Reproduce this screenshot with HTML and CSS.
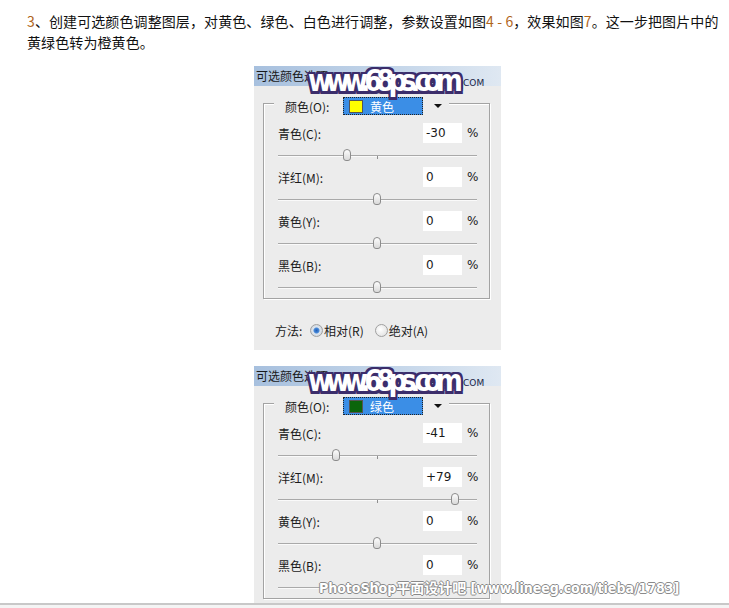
FILE: index.html
```html
<!DOCTYPE html>
<html>
<head>
    <meta charset="utf-8">
    <link rel="stylesheet" href="styles.css">
</head>
<body>
    <div class="article">
        <p class="intro"><span class="num">3</span>、创建可选颜色调整图层，对黄色、绿色、白色进行调整，参数设置如图<span class="num">4 - 6</span>，效果如图<span class="num">7</span>。这一步把图片中的黄绿色转为橙黄色。</p>

        <div class="dialog">
            <div class="titlebar">可选颜色选项</div>
            <div class="wm-small">思缘设计论坛 WWW.MISSYUAN.COM</div>
            <div class="wm68">www.68ps.com</div>
            <div class="group">
                <div class="legend">
                    <span class="legend-label">颜色(O):</span>
                    <div class="select"><i class="swatch swatch-yellow"></i>黄色</div>
                    <span class="arrow"><i></i></span>
                </div>
                <div class="rows">
                    <div class="row">
                        <div class="row-head"><span class="row-label">青色(C):</span><span class="value">-30</span><span class="pct">%</span></div>
                        <div class="slider"><div class="track"></div><div class="thumb" style="--v:-30"></div></div>
                    </div>
                    <div class="row">
                        <div class="row-head"><span class="row-label">洋红(M):</span><span class="value">0</span><span class="pct">%</span></div>
                        <div class="slider"><div class="track"></div><div class="thumb" style="--v:0"></div></div>
                    </div>
                    <div class="row">
                        <div class="row-head"><span class="row-label">黄色(Y):</span><span class="value">0</span><span class="pct">%</span></div>
                        <div class="slider"><div class="track"></div><div class="thumb" style="--v:0"></div></div>
                    </div>
                    <div class="row">
                        <div class="row-head"><span class="row-label">黑色(B):</span><span class="value">0</span><span class="pct">%</span></div>
                        <div class="slider"><div class="track"></div><div class="thumb" style="--v:0"></div></div>
                    </div>
                </div>
            </div>
            <div class="method">
                <span class="method-label">方法:</span>
                <span class="radio radio-on"></span><span class="radio-text">相对(R)</span>
                <span class="radio radio-second"></span><span class="radio-text">绝对(A)</span>
            </div>
        </div>

        <div class="clip">
            <div class="dialog dialog-flat">
                <div class="titlebar">可选颜色选项</div>
                <div class="wm-small">思缘设计论坛 WWW.MISSYUAN.COM</div>
                <div class="wm68">www.68ps.com</div>
                <div class="group">
                    <div class="legend">
                        <span class="legend-label">颜色(O):</span>
                        <div class="select"><i class="swatch swatch-green"></i>绿色</div>
                        <span class="arrow"><i></i></span>
                    </div>
                    <div class="rows">
                        <div class="row">
                            <div class="row-head"><span class="row-label">青色(C):</span><span class="value">-41</span><span class="pct">%</span></div>
                            <div class="slider"><div class="track"></div><div class="thumb" style="--v:-41"></div></div>
                        </div>
                        <div class="row">
                            <div class="row-head"><span class="row-label">洋红(M):</span><span class="value">+79</span><span class="pct">%</span></div>
                            <div class="slider"><div class="track"></div><div class="thumb" style="--v:79"></div></div>
                        </div>
                        <div class="row">
                            <div class="row-head"><span class="row-label">黄色(Y):</span><span class="value">0</span><span class="pct">%</span></div>
                            <div class="slider"><div class="track"></div><div class="thumb" style="--v:0"></div></div>
                        </div>
                        <div class="row">
                            <div class="row-head"><span class="row-label">黑色(B):</span><span class="value">0</span><span class="pct">%</span></div>
                            <div class="slider"><div class="track"></div><div class="thumb" style="--v:0"></div></div>
                        </div>
                    </div>
                </div>
            </div>
        </div>

        <div class="wm-bottom">PhotoShop平面设计吧 [www.lineeg.com/tieba/1783]</div>
    </div>
    <div class="footer"></div>
</body>
</html>
```

FILE: styles.css
```css
* {
    box-sizing: border-box;
}

html, body {
    margin: 0;
    height: 608px;
    overflow: hidden;
    background: #fff;
}

body {
    font-family: "Noto Sans CJK SC", sans-serif;
}

.article {
    position: relative;
    padding: 11px 0 0 27px;
}

.intro {
    margin: 0;
    width: 695px;
    font-size: 14px;
    line-height: 21px;
    letter-spacing: 0.1px;
    color: #111;
}

.num {
    color: #b0651c;
}

/* dialog screenshot */
.dialog {
    position: relative;
    width: 247px;
    height: 284px;
    margin: 13px 0 0 227px;
    background: #ececec;
    font-family: "DejaVu Sans", "Noto Sans CJK SC", sans-serif;
    font-size: 12px;
    color: #1a1a1a;
}

.dialog-flat {
    margin: 0;
}

.clip {
    width: 247px;
    height: 237px;
    margin: 16px 0 0 227px;
    overflow: hidden;
}

.titlebar {
    height: 20px;
    line-height: 20px;
    padding-left: 2px;
    font-family: "Noto Sans CJK SC", sans-serif;
    background: linear-gradient(to right, #a7c0de, #c6d7ea 60%, #dfe8f2);
}

.wm68 {
    position: absolute;
    top: -1px;
    left: 54px;
    font-family: "DejaVu Sans", sans-serif;
    font-weight: bold;
    font-size: 26px;
    line-height: 28px;
    letter-spacing: -6px;
    color: #fff;
    white-space: nowrap;
    transform: scaleY(1.15);
    transform-origin: left top;
    text-shadow: 2px 0 #3b2d6b, -2px 0 #3b2d6b, 0 2px #3b2d6b, 0 -2px #3b2d6b,
                 2px 2px #3b2d6b, -2px -2px #3b2d6b, 2px -2px #3b2d6b, -2px 2px #3b2d6b;
}

.wm-small {
    position: absolute;
    top: 11px;
    left: 74px;
    font-size: 9px;
    line-height: 12px;
    color: #1c2444;
    white-space: nowrap;
}

.group {
    height: 196px;
    margin: 17px 11px 0 9px;
    border: 1px solid #a3a3a3;
    box-shadow: inset 1px 1px 0 #fff, 1px 1px 0 #fff;
}

.legend {
    display: flex;
    align-items: center;
    width: 175px;
    height: 18px;
    margin: -7px 0 0 10px;
    padding-left: 11px;
    background: #ececec;
}

.legend-label {
    width: 58px;
    font-family: "Noto Sans CJK SC", sans-serif;
}

.select {
    display: flex;
    align-items: center;
    width: 80px;
    height: 18px;
    padding-left: 5px;
    background: #3b8ee6;
    border: 1px dotted #222;
    color: #fff;
    font-family: "Noto Sans CJK SC", sans-serif;
}

.swatch {
    width: 14px;
    height: 13px;
    margin-right: 7px;
    border: 1px solid #555;
}

.swatch-yellow {
    background: #ffff00;
}

.swatch-green {
    background: #0b650b;
}

.arrow {
    width: 26px;
    padding-left: 11px;
}

.arrow i {
    display: block;
    width: 0;
    height: 0;
    border-left: 4px solid transparent;
    border-right: 4px solid transparent;
    border-top: 4px solid #111;
}

.rows {
    padding: 8px 0 0 14px;
}

.row {
    height: 44px;
}

.row-head {
    display: flex;
    align-items: center;
    height: 20px;
}

.row-label {
    width: 145px;
    font-family: "Noto Sans CJK SC", sans-serif;
}

.value {
    width: 39px;
    height: 20px;
    line-height: 20px;
    padding-left: 3px;
    background: #fff;
}

.pct {
    margin-left: 5px;
}

.slider {
    position: relative;
    width: 199px;
    height: 24px;
    padding-top: 12px;
}

.track {
    position: relative;
    height: 2px;
    border-top: 1px solid #a9a9a9;
    border-bottom: 1px solid #fafafa;
}

.track::after {
    content: "";
    position: absolute;
    left: 99px;
    top: 0;
    width: 1px;
    height: 3px;
    background: #8e8e8e;
}

.thumb {
    position: absolute;
    top: 6px;
    left: calc(95px + var(--v) * 0.99px);
    width: 8px;
    height: 12px;
    border: 1px solid #8c8c8c;
    border-radius: 4px 4px 3px 3px;
    background: linear-gradient(#fdfdfd, #d9d9d9);
}

.method {
    display: flex;
    align-items: center;
    height: 20px;
    margin: 21px 0 0 21px;
    font-family: "Noto Sans CJK SC", sans-serif;
}

.method-label {
    width: 35px;
}

.radio {
    width: 13px;
    height: 13px;
    border: 1px solid #a0a0a0;
    border-radius: 50%;
    background: radial-gradient(circle at 40% 40%, #fff, #dcdcdc);
}

.radio-on {
    background: radial-gradient(circle, #1f5fb8 0, #4a8ad8 2.5px, #dfe6ee 3.5px, #cfd6de 6px);
}

.radio-second {
    margin-left: 11px;
}

.radio-text {
    margin-left: 1px;
}

.wm-bottom {
    position: absolute;
    top: 579px;
    left: 319px;
    font-family: "DejaVu Sans Condensed", "Noto Sans CJK SC", sans-serif;
    font-weight: bold;
    font-size: 14px;
    line-height: 18px;
    color: #fff;
    white-space: nowrap;
    text-shadow: 1px 0 #8a8a8a, -1px 0 #8a8a8a, 0 1px #8a8a8a, 0 -1px #8a8a8a;
}

.footer {
    height: 10px;
    border-top: 2px solid #c8c8c8;
    background: #f4f4f4;
}
```
